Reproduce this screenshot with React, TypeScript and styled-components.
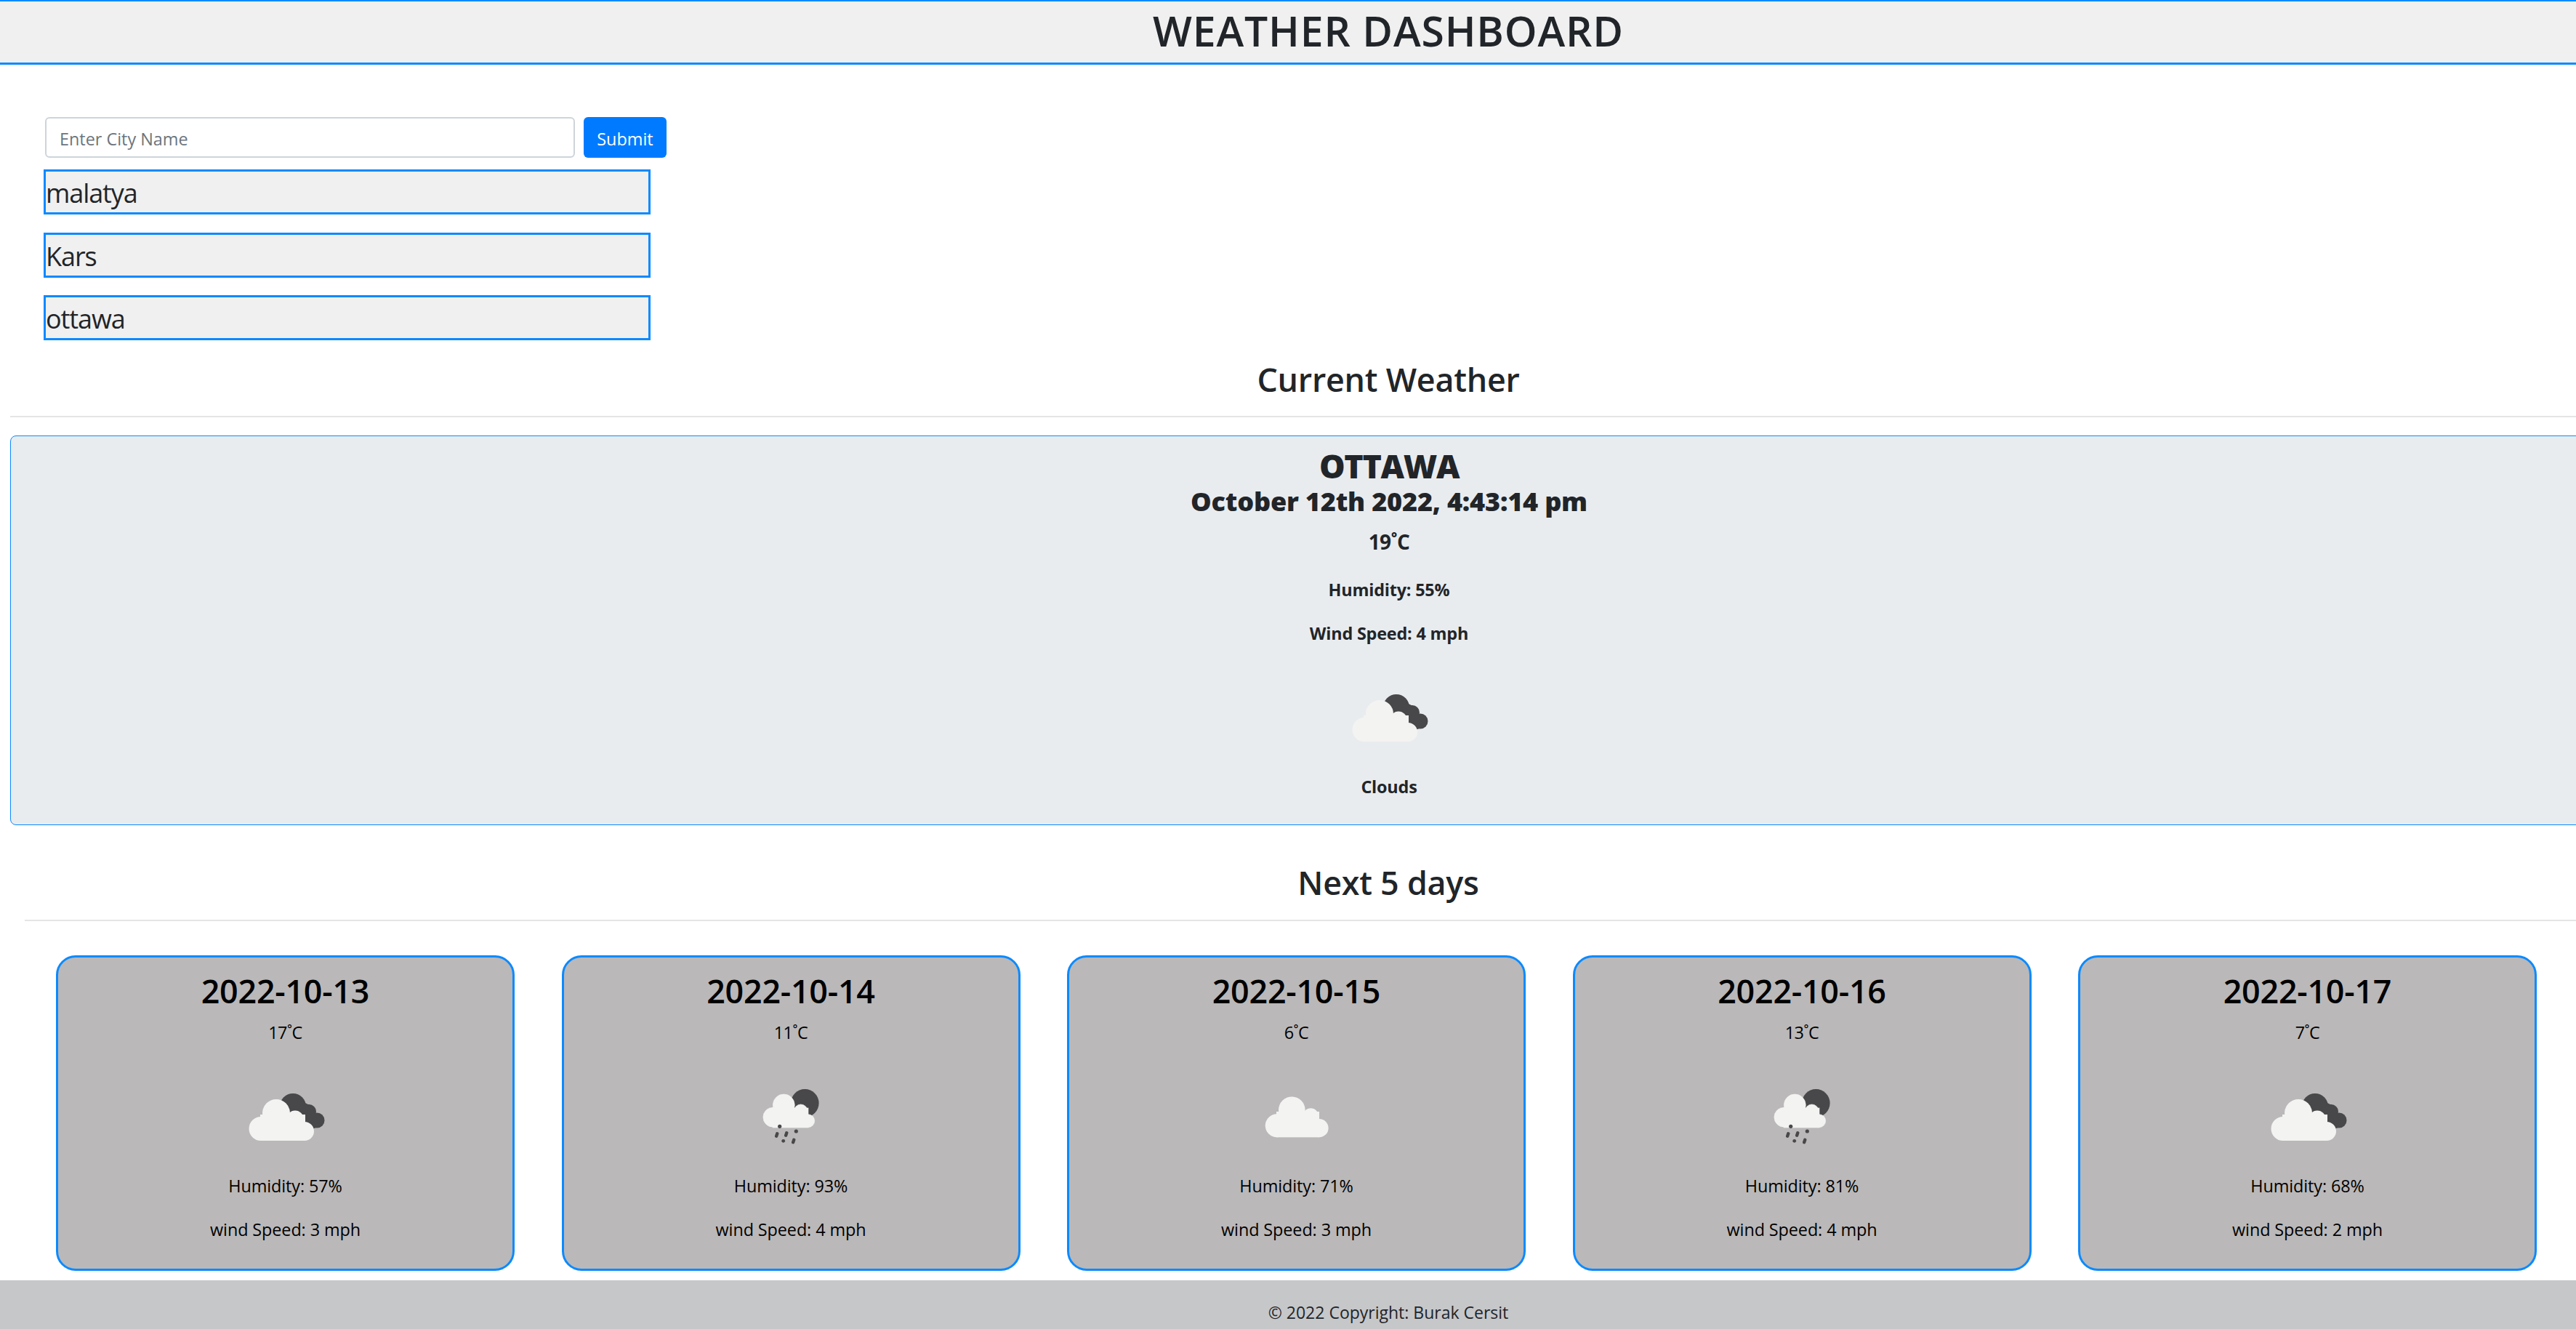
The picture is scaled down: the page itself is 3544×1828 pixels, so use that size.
import styled, { createGlobalStyle } from 'styled-components';

const GlobalStyle = createGlobalStyle`
	html, body {
		margin: 0;
		padding: 0;
		background: #fff;
		overflow: hidden;
	}
	* {
		box-sizing: border-box;
	}
`;

const Page = styled.div`
	width: 3820px;
	height: 1828px;
	overflow: hidden;
	font-family: "Open Sans", "Noto Sans", sans-serif;
	font-size: 23.4px;
	color: #212529;
`;

const Header = styled.header`
	height: 89px;
	padding-bottom: 3px;
	background: #f0f0f0;
	border-top: 2px solid #0a8aff;
	border-bottom: 3px solid #0a8aff;
	display: flex;
	justify-content: center;
	align-items: center;
`;

const Title = styled.h1`
	margin: 0;
	font-size: 57px;
	font-weight: 600;
	letter-spacing: 0.015em;
	line-height: 1.2;
`;

const SearchForm = styled.form`
	display: flex;
	gap: 12px;
	margin: 72px 0 0 62px;
`;

const CityInput = styled.input`
	width: 729px;
	height: 56px;
	padding: 3px 18px 0;
	border: 2px solid #ced4da;
	border-radius: 6px;
	background: #fff;
	font: inherit;

	&::placeholder {
		color: #6c757d;
	}
`;

const SubmitButton = styled.button`
	width: 114px;
	height: 56px;
	padding: 3px 0 0;
	border: 0;
	border-radius: 6px;
	background: #007bff;
	color: #fff;
	font: inherit;
`;

const CityList = styled.ul`
	list-style: none;
	display: flex;
	flex-direction: column;
	gap: 24.5px;
	width: 835px;
	margin: 16px 0 0 60px;
	padding: 0;
`;

const CityItem = styled.li`
	height: 62px;
	padding-left: 0;
	background: #f0f0f0;
	border: 3px solid #0a8aff;
	font-size: 36px;
	letter-spacing: -0.03em;
	line-height: 60px;
`;

const SectionTitle = styled.h2<{ $top: number }>`
	margin: ${(p) => p.$top}px 0 0;
	text-align: center;
	font-size: 44.8px;
	font-weight: 600;
	letter-spacing: -0.005em;
	line-height: 60px;
`;

const Divider = styled.hr<{ $left: number; $top: number }>`
	margin: ${(p) => p.$top}px 0 0 ${(p) => p.$left}px;
	border: 0;
	border-top: 2px solid #e5e5e5;
`;

const CurrentPanel = styled.section`
	width: 3794px;
	height: 536px;
	margin: 25px 0 0 14px;
	padding-top: 15px;
	background: #e9ecef;
	border: 1px solid #0a8aff;
	border-radius: 8px;
	text-align: center;
`;

const CityName = styled.h2`
	margin: 0;
	font-size: 44.8px;
	font-weight: 800;
	line-height: 52px;
	letter-spacing: -0.03em;
`;

const DateLine = styled.h3`
	margin: 0;
	font-size: 36px;
	font-weight: 800;
	letter-spacing: -0.005em;
	line-height: 46px;
`;

const CurrentTemp = styled.h5`
	margin: 15px 0 32px;
	font-size: 28px;
	font-weight: 700;
	letter-spacing: -0.02em;
	line-height: 34px;
`;

const Stat = styled.p<{ $bold?: boolean; $gap: number }>`
	margin: 0 0 ${(p) => p.$gap}px;
	font-weight: ${(p) => (p.$bold ? 700 : 500)};
	letter-spacing: ${(p) => (p.$bold ? '-0.008em' : '-0.004em')};
	line-height: 34px;
`;

const IconFrame = styled.svg`
	display: block;
	width: 140px;
	height: 120px;
	margin: 42px auto 15px;
`;

const NextRow = styled.div`
	display: grid;
	grid-template-columns: repeat(5, 631px);
	column-gap: 64.5px;
	margin: 47px 0 0 77px;
`;

const DayCard = styled.article`
	height: 434px;
	padding-top: 19px;
	background: #bab8b9;
	border: 3px solid #0a8aff;
	border-radius: 27px;
	color: #000;
	text-align: center;
`;

const DayDate = styled.h2`
	margin: 0;
	font-size: 44.8px;
	font-weight: 600;
	letter-spacing: -0.005em;
	line-height: 54px;
`;

const DayTemp = styled.p`
	margin: 13px 0 0;
	font-weight: 500;
	letter-spacing: -0.02em;
	line-height: 34px;
`;

const Footer = styled.footer`
	height: 90px;
	margin-top: 13px;
	padding-top: 28px;
	background: #c6c7c9;
	font-size: 23px;
	line-height: 32px;
	text-align: center;
`;

type Kind = 'broken' | 'rain' | 'cloud';

const WeatherIcon = ({ kind }: { kind: Kind }) => {
	if (kind === 'cloud') {
		return (
			<IconFrame viewBox="0 0 140 120">
				<g fill="#f3f3f2">
					<circle cx="42.7" cy="69.3" r="16" />
					<circle cx="63.3" cy="47.7" r="18.3" />
					<circle cx="89.3" cy="56" r="10.7" />
					<circle cx="101" cy="72.7" r="12.6" />
					<rect x="42" y="50" width="59" height="35.3" />
				</g>
			</IconFrame>
		);
	}

	if (kind === 'rain') {
		return (
			<IconFrame viewBox="0 0 140 120">
				<circle cx="89.3" cy="38.3" r="19.3" fill="#48484a" />
				<g fill="#f3f3f2" stroke="#f3f3f2" strokeWidth="0.6">
					<circle cx="45.3" cy="57.7" r="13.4" />
					<circle cx="60.3" cy="41" r="15" />
					<circle cx="83.7" cy="49.3" r="9.3" />
					<circle cx="93.7" cy="62.7" r="9" />
					<rect x="45" y="45" width="49" height="27" />
				</g>
				<g fill="#48484a">
					<circle cx="54.7" cy="70.3" r="2.6" />
					<rect x="48.5" y="78" width="4.4" height="8" rx="2" transform="rotate(18 50.7 82)" />
					<rect x="61.5" y="77" width="4.4" height="8" rx="2" transform="rotate(18 63.7 81)" />
					<circle cx="77.3" cy="77" r="2.6" />
					<circle cx="59.7" cy="90.3" r="2.4" />
					<rect x="71.5" y="86.5" width="4.4" height="8" rx="2" transform="rotate(18 73.7 90.5)" />
				</g>
			</IconFrame>
		);
	}

	return (
		<IconFrame viewBox="0 0 140 120">
			<g fill="#48484a">
				<circle cx="80" cy="43" r="18" />
				<circle cx="102" cy="50" r="10" />
				<circle cx="113" cy="62" r="10.5" />
				<path d="M80 30 L105 42 L118 70 L100 76 L70 50 Z" />
			</g>
			<g fill="#f3f3f2" stroke="#f3f3f2" strokeWidth="2">
				<circle cx="36" cy="73.5" r="15.5" />
				<circle cx="57" cy="52" r="18" />
				<circle cx="83" cy="60" r="10.5" />
				<circle cx="96" cy="77" r="12" />
				<rect x="36" y="55" width="60" height="34" />
			</g>
		</IconFrame>
	);
};

const days: { date: string; temp: number; icon: Kind; humidity: number; wind: number }[] = [
	{ date: '2022-10-13', temp: 17, icon: 'broken', humidity: 57, wind: 3 },
	{ date: '2022-10-14', temp: 11, icon: 'rain', humidity: 93, wind: 4 },
	{ date: '2022-10-15', temp: 6, icon: 'cloud', humidity: 71, wind: 3 },
	{ date: '2022-10-16', temp: 13, icon: 'rain', humidity: 81, wind: 4 },
	{ date: '2022-10-17', temp: 7, icon: 'broken', humidity: 68, wind: 2 },
];

const App = () => {
	return (
		<Page>
			<GlobalStyle />
			<Header>
				<Title>WEATHER DASHBOARD</Title>
			</Header>
			<SearchForm onSubmit={(ev) => ev.preventDefault()}>
				<CityInput type="text" placeholder="Enter City Name" />
				<SubmitButton type="submit">Submit</SubmitButton>
			</SearchForm>
			<CityList>
				<CityItem>malatya</CityItem>
				<CityItem>Kars</CityItem>
				<CityItem>ottawa</CityItem>
			</CityList>
			<SectionTitle $top={24}>Current Weather</SectionTitle>
			<Divider $left={14} $top={20} />
			<CurrentPanel>
				<CityName>OTTAWA</CityName>
				<DateLine>October 12th 2022, 4:43:14 pm</DateLine>
				<CurrentTemp>19˚C</CurrentTemp>
				<Stat $bold $gap={26}>Humidity: 55%</Stat>
				<Stat $bold $gap={0}>Wind Speed: 4 mph</Stat>
				<WeatherIcon kind="broken" />
				<Stat $bold $gap={0}>Clouds</Stat>
			</CurrentPanel>
			<SectionTitle $top={49}>Next 5 days</SectionTitle>
			<Divider $left={34} $top={21} />
			<NextRow>
				{days.map((day) => (
					<DayCard key={day.date}>
						<DayDate>{day.date}</DayDate>
						<DayTemp>{day.temp}˚C</DayTemp>
						<WeatherIcon kind={day.icon} />
						<Stat $gap={26}>Humidity: {day.humidity}%</Stat>
						<Stat $gap={0}>wind Speed: {day.wind} mph</Stat>
					</DayCard>
				))}
			</NextRow>
			<Footer>© 2022 Copyright: Burak Cersit</Footer>
		</Page>
	);
};

export default App;
